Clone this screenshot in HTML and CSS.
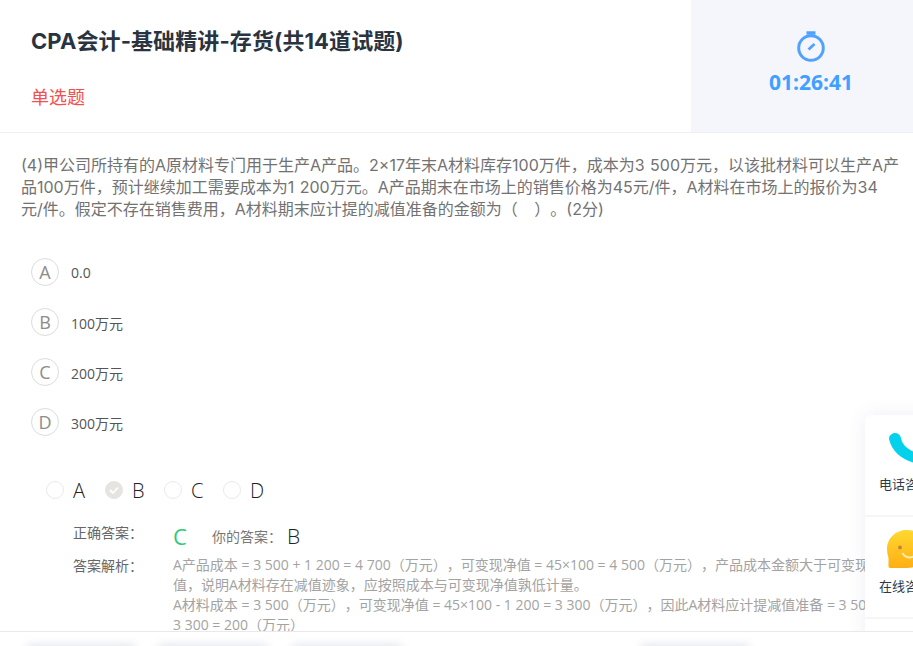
FILE: index.html
```html
<!DOCTYPE html>
<html lang="zh-CN">
<head>
<meta charset="utf-8">
<title>CPA会计-基础精讲-存货</title>
<link rel="stylesheet" href="styles.css">
</head>
<body>
<div class="page">
  <header class="head">
    <div class="head-main">
      <h1 class="title">CPA会计-基础精讲-存货(共14道试题)</h1>
      <div class="qtype">单选题</div>
    </div>
    <div class="timer">
      <svg class="timer-icon" viewBox="0 0 30 31" width="30" height="31"><path d="M10.500 2h9" fill="none" stroke="#4fa3ff" stroke-width="3.500"/><circle cx="15" cy="17" r="12.300" fill="none" stroke="#4fa3ff" stroke-width="3"/><path d="M12.500 18.500L18.500 13" fill="none" stroke="#4fa3ff" stroke-width="2.800"/></svg>
      <div class="timer-text">01:26:41</div>
    </div>
  </header>
  <main class="body">
    <p class="stem">(4)甲公司所持有的A原材料专门用于生产A产品。2×17年末A材料库存100万件，成本为3 500万元，以该批材料可以生产A产<br>品100万件，预计继续加工需要成本为1 200万元。A产品期末在市场上的销售价格为45元/件，A材料在市场上的报价为34<br>元/件。假定不存在销售费用，A材料期末应计提的减值准备的金额为（&nbsp;&nbsp;&nbsp;）。(2分)</p>
    <ul class="options">
      <li class="option"><span class="letter">A</span><span class="otext">0.0</span></li>
      <li class="option"><span class="letter">B</span><span class="otext">100万元</span></li>
      <li class="option"><span class="letter">C</span><span class="otext">200万元</span></li>
      <li class="option"><span class="letter">D</span><span class="otext">300万元</span></li>
    </ul>
    <div class="picks">
      <div class="pick"><span class="radio"></span>A</div>
      <div class="pick"><span class="radio on"><svg viewBox="0 0 18 18" width="18" height="18"><path d="M5 9l3 3 5-5.500" fill="none" stroke="#fff" stroke-width="1.800"/></svg></span>B</div>
      <div class="pick"><span class="radio"></span>C</div>
      <div class="pick"><span class="radio"></span>D</div>
    </div>
    <div class="answer">
      <div class="ans-label">正确答案：</div>
      <div class="ans-row"><span class="right">C</span><span class="your">你的答案：</span><span class="yours">B</span></div>
      <div class="ans-label exp-label">答案解析：</div>
      <div class="explain">A产品成本 = 3 500 + 1 200 = 4 700（万元），可变现净值 = 45×100 = 4 500（万元），产品成本金额大于可变现净<br>值，说明A材料存在减值迹象，应按照成本与可变现净值孰低计量。<br>A材料成本 = 3 500（万元），可变现净值 = 45×100 - 1 200 = 3 300（万元），因此A材料应计提减值准备 = 3 500 -<br>3 300 = 200（万元）</div>
    </div>
  </main>
  <aside class="side">
    <div class="side-item phone">
      <svg class="side-icon" viewBox="0 0 40 32" width="40" height="32"><path d="M10 6C10 2.500 13 0 16 0s5.500 2 6 5c.7 3 1.500 5.500 4 8 3 3 8 6 14 8v9.500C26 29 13 20 10 6z" fill="#04d2ec"/></svg>
      <span class="side-text">电话咨询</span>
    </div>
    <div class="side-item chat">
      <svg class="side-icon" viewBox="0 0 48 40" width="48" height="40"><defs><linearGradient id="smile" x1="0" y1="0" x2="0" y2="1"><stop offset="0" stop-color="#ffd92f"/><stop offset="1" stop-color="#ffae13"/></linearGradient></defs><path d="M0 19C0 8 9 0 20 0s20 8 20 19-9 19-20 19H3c-1 0-1.500-1-1.500-2v-8C.5 25 0 22 0 19z" fill="url(#smile)"/><circle cx="13" cy="17.500" r="2" fill="#c8813a"/><path d="M15.500 23c2 5 8 5.500 12 3" fill="none" stroke="#ffeeb0" stroke-width="2"/></svg>
      <span class="side-text">在线咨询</span>
    </div>
    <div class="side-item"></div>
  </aside>
  <footer class="foot">
    <span class="ghost g1"></span><span class="ghost g2"></span><span class="ghost g3"></span><span class="ghost g4"></span>
  </footer>
</div>
</body>
</html>
```
FILE: styles.css
```css
* { box-sizing: border-box; }
html, body { margin: 0; padding: 0; }
body { background: #fff; font-family: "Open Sans", "Noto Sans CJK SC", sans-serif; text-spacing-trim: space-all; }
.page { position: relative; width: 913px; height: 646px; overflow: hidden; }
.head { display: flex; width: 931px; height: 133px; border-bottom: 1px solid #eeeff2; }
.head-main { flex: 1; padding: 24px 0 0 31px; }
.title { margin: 0; font-family: Inter, "Noto Sans CJK SC", sans-serif; font-size: 22px; line-height: 34px; font-weight: 700; color: #2a3441; letter-spacing: .1px; }
.qtype { margin-top: 27px; font-size: 18px; line-height: 24px; color: #f4504c; }
.timer { width: 240px; background: #f5f6fb; display: flex; flex-direction: column; align-items: center; padding-top: 31px; }
.timer-icon { display: block; }
.timer-text { margin-top: 5px; font-size: 21px; line-height: 30px; font-weight: 700; color: #3fa0ff; }
.body { padding: 21px 0 0 21px; }
.stem { margin: 0; font-family: Inter, "Noto Sans CJK SC", sans-serif; font-size: 16px; line-height: 22px; color: #727272; white-space: nowrap; word-spacing: 1px; }
.options { list-style: none; margin: 38px 0 0 10px; padding: 0; display: flex; flex-direction: column; gap: 22px; }
.option { display: flex; align-items: center; height: 28px; }
.letter { width: 28px; height: 28px; border: 1px solid #dcdcdc; border-radius: 50%; display: flex; align-items: center; justify-content: center; font-size: 18px; font-weight: 400; color: #8c8c8c; }
.otext { margin: 1px 0 0 12px; font-size: 14px; color: #555; }
.picks { display: flex; margin: 42px 0 0 25px; }
.pick { display: flex; align-items: center; height: 24px; font-size: 20px; font-weight: 300; color: #222; width: 59px; }
.radio { width: 18px; height: 18px; border: 1px solid #eaeaea; border-radius: 50%; margin-right: 9px; }
.radio.on { background: #e5e4e0; border-color: #e5e4e0; }
.radio svg { display: block; margin: -1px; }
.answer { display: grid; grid-template-columns: 100px 720px; margin: 19px 0 0 52px; }
.ans-label { font-size: 14px; line-height: 24px; color: #666; }
.ans-row { display: flex; align-items: center; height: 30px; }
.right { font-size: 22px; color: #2ccb7a; width: 39px; }
.your { font-size: 14px; color: #777; }
.yours { font-size: 21px; font-weight: 300; color: #222; margin-left: 5px; }
.exp-label { margin-top: 3px; }
.explain { margin-top: 4px; font-size: 14px; line-height: 20px; color: #a3a3a3; white-space: nowrap; }
.side { position: absolute; left: 865px; top: 415px; width: 120px; background: #fff; border-radius: 6px; box-shadow: 0 0 18px rgba(120, 110, 170, .12); }
.side-item { height: 102px; padding-left: 14px; border-bottom: 2px solid #f6f6f8; display: flex; flex-direction: column; }
.side-item.phone { padding-top: 18px; }
.side-item.chat { padding-top: 13px; }
.side-icon { display: block; flex: none; }
.phone .side-icon { margin: 0 0 10px 0; }
.chat .side-icon { margin: 0 0 7px 8px; }
.side-text { font-size: 13px; line-height: 18px; color: #2b3a48; white-space: nowrap; }
.foot { position: absolute; left: 0; right: 0; top: 631px; height: 15px; background: #fff; border-top: 1px solid #e9e9ec; display: flex; overflow: hidden; }
.ghost { position: absolute; top: 13px; height: 10px; width: 110px; border-radius: 6px; background: #dfe1ea; filter: blur(5px); }
.g1 { left: 26px; }
.g2 { left: 158px; }
.g3 { left: 292px; }
.g4 { left: 640px; }
```
